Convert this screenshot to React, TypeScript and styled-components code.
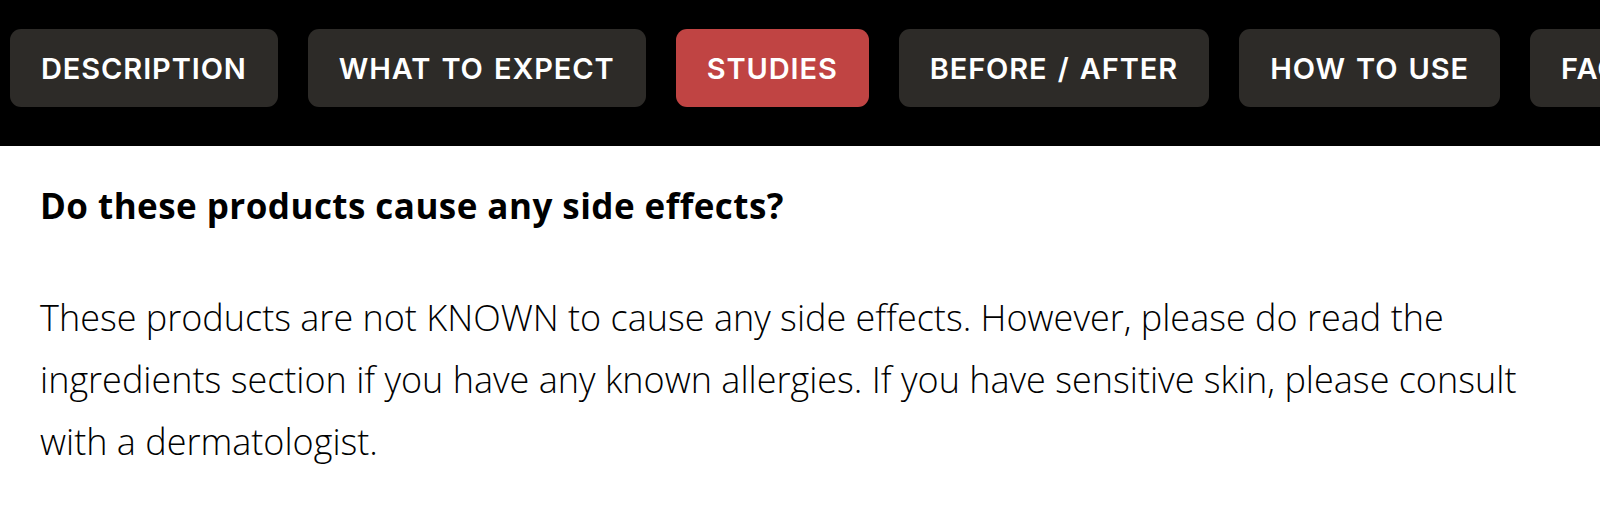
import React from 'react'
import styled, { createGlobalStyle } from 'styled-components'

const GlobalStyle = createGlobalStyle`
  html, body {
    margin: 0;
    padding: 0;
    background: #fff;
  }
`

const tabs = ['DESCRIPTION', 'WHAT TO EXPECT', 'STUDIES', 'BEFORE / AFTER', 'HOW TO USE', 'FAQ']

const Page = styled.div`
  width: 1600px;
  height: 518px;
  overflow: hidden;
  background: #fff;
`

const TabBar = styled.nav`
  background: #000;
  height: 146px;
  box-sizing: border-box;
  padding: 29px 0 0 10px;
  display: flex;
  gap: 30px;
  overflow: hidden;
  white-space: nowrap;
`

const Tab = styled.button<{ $active?: boolean }>`
  flex: none;
  height: 78px;
  padding: 0 31px;
  border: none;
  border-radius: 11px;
  background: ${(p) => (p.$active ? '#c04443' : '#2d2b28')};
  color: #fff;
  font-family: Inter, 'Noto Sans', sans-serif;
  font-weight: 600;
  font-size: 29px;
  letter-spacing: 0.9px;
  word-spacing: 2px;
  cursor: pointer;
`

const Content = styled.section`
  padding: 36px 40px 0;
  font-family: 'Open Sans', sans-serif;
  color: #000;

  h2 {
    margin: 0 0 58px;
    font-size: 35px;
    font-weight: 700;
    letter-spacing: 0.45px;
  }

  p {
    margin: 0;
    font-size: 36px;
    font-weight: 300;
    line-height: 62px;
  }
`

const App: React.FC = () => {
  return (
    <Page>
      <GlobalStyle />
      <TabBar>
        {tabs.map((t) => (
          <Tab key={t} $active={t === 'STUDIES'}>
            {t}
          </Tab>
        ))}
      </TabBar>
      <Content>
        <h2>Do these products cause any side effects?</h2>
        <p>
          These products are not KNOWN to cause any side effects. However, please do read the ingredients
          section if you have any known allergies. If you have sensitive skin, please consult with a
          dermatologist.
        </p>
      </Content>
    </Page>
  )
}

export default App
